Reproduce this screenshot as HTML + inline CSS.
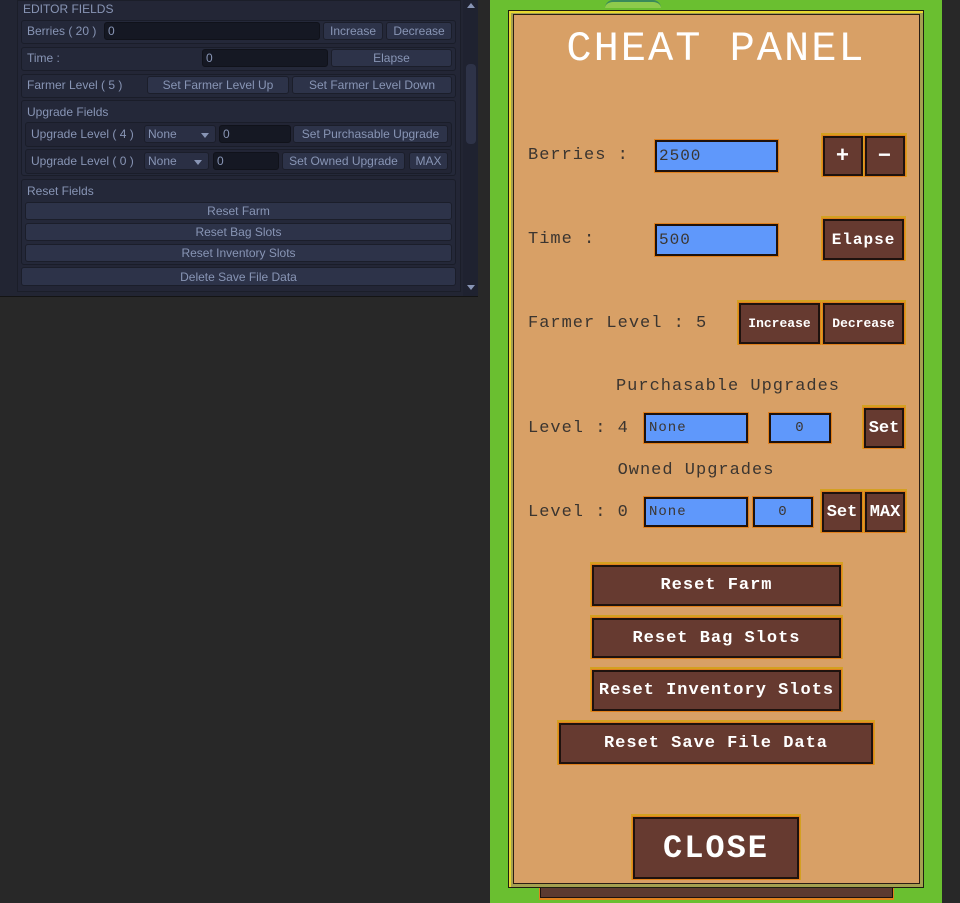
<!DOCTYPE html>
<html><head><meta charset="utf-8"><style>
*{margin:0;padding:0;box-sizing:border-box}
body{width:960px;height:903px;background:#282828;position:relative;overflow:hidden;font-family:"Liberation Sans",sans-serif}
.a{position:absolute}
.ed{color:#8895b5;font-size:12px;line-height:1}
.row{position:absolute;background:#242839;border:1px solid #1a1d29;border-radius:3px}
.btn{position:absolute;background:#2d3349;border:1px solid #1b1e2a;border-radius:3px;color:#8895b5;font-size:12px;display:flex;align-items:center;justify-content:center;white-space:nowrap}
.fld{position:absolute;background:#151823;border:1px solid #10121a;border-radius:3px;color:#8895b5;font-size:12px;padding-left:3px;display:flex;align-items:center}
.dd{position:absolute;background:#2a2f44;border:1px solid #1b1e2a;border-radius:3px;color:#8895b5;font-size:12px;padding-left:3px;display:flex;align-items:center}
.dd:after{content:"";position:absolute;right:6px;top:7px;border:4px solid transparent;border-top:5px solid #8895b5}
.px{font-family:"Liberation Mono",monospace;font-weight:bold}
.lbl{position:absolute;color:#3b3530;font-size:17px;line-height:1;white-space:nowrap;letter-spacing:1px;font-weight:normal !important}
.b{position:absolute;background:#663a30;border:2px solid #1e120e;box-shadow:0 0 0 1px #e0801c,0 -1px 0 2px #d4a020;color:#fff;display:flex;align-items:center;justify-content:center;font-size:15px;white-space:nowrap;letter-spacing:1px}
.in{position:absolute;background:#5f98fb;border:2px solid #1e120e;box-shadow:0 0 0 1px #e0801c;color:#3b3530;font-size:16px;display:flex;align-items:center;letter-spacing:1px;font-weight:normal !important}
</style></head><body>
<div class="a" style="left:0;top:0;width:478px;height:297px;background:#222533;border-bottom:1px solid #141414"></div>
<div class="a" style="left:17px;top:0;width:444px;height:292px;background:#232636;border:1px solid #1b1e29"></div>
<div class="a ed" style="left:23px;top:3px">EDITOR FIELDS</div>
<div class="row" style="left:21px;top:20px;width:435px;height:24px"></div>
<div class="a ed" style="left:27px;top:25px">Berries ( 20 )</div>
<div class="fld" style="left:104px;top:22px;width:216px;height:18px">0</div>
<div class="btn" style="left:323px;top:22px;width:60px;height:18px">Increase</div>
<div class="btn" style="left:386px;top:22px;width:66px;height:18px">Decrease</div>
<div class="row" style="left:21px;top:47px;width:435px;height:24px"></div>
<div class="a ed" style="left:27px;top:52px">Time :</div>
<div class="fld" style="left:202px;top:49px;width:126px;height:18px">0</div>
<div class="btn" style="left:331px;top:49px;width:121px;height:18px">Elapse</div>
<div class="row" style="left:21px;top:74px;width:435px;height:24px"></div>
<div class="a ed" style="left:27px;top:79px">Farmer Level ( 5 )</div>
<div class="btn" style="left:147px;top:76px;width:142px;height:18px">Set Farmer Level Up</div>
<div class="btn" style="left:292px;top:76px;width:160px;height:18px">Set Farmer Level Down</div>
<div class="row" style="left:21px;top:100px;width:435px;height:76px"></div>
<div class="a ed" style="left:27px;top:106px">Upgrade Fields</div>
<div class="row" style="left:25px;top:122px;width:427px;height:25px;background:#222535"></div>
<div class="a ed" style="left:31px;top:128px">Upgrade Level ( 4 )</div>
<div class="dd" style="left:144px;top:125px;width:72px;height:18px">None</div>
<div class="fld" style="left:219px;top:125px;width:72px;height:18px">0</div>
<div class="btn" style="left:293px;top:125px;width:155px;height:18px">Set Purchasable Upgrade</div>
<div class="row" style="left:25px;top:149px;width:427px;height:25px;background:#222535"></div>
<div class="a ed" style="left:31px;top:155px">Upgrade Level ( 0 )</div>
<div class="dd" style="left:144px;top:152px;width:65px;height:18px">None</div>
<div class="fld" style="left:213px;top:152px;width:66px;height:18px">0</div>
<div class="btn" style="left:282px;top:152px;width:123px;height:18px">Set Owned Upgrade</div>
<div class="btn" style="left:409px;top:152px;width:39px;height:18px">MAX</div>
<div class="row" style="left:21px;top:179px;width:435px;height:86px"></div>
<div class="a ed" style="left:27px;top:185px">Reset Fields</div>
<div class="btn" style="left:25px;top:202px;width:427px;height:18px">Reset Farm</div>
<div class="btn" style="left:25px;top:223px;width:427px;height:18px">Reset Bag Slots</div>
<div class="btn" style="left:25px;top:244px;width:427px;height:18px">Reset Inventory Slots</div>
<div class="btn" style="left:21px;top:267px;width:435px;height:19px">Delete Save File Data</div>
<div class="a" style="left:463px;top:0;width:15px;height:296px;background:#1f2230"></div>
<div class="a" style="left:466px;top:64px;width:10px;height:80px;background:#2e3348;border-radius:4px"></div>
<div class="a" style="left:467px;top:3px;border:4px solid transparent;border-bottom:5px solid #8895b5;border-top:0"></div>
<div class="a" style="left:467px;top:285px;border:4px solid transparent;border-top:5px solid #8895b5;border-bottom:0"></div>
<div class="a" style="left:490px;top:0;width:452px;height:903px;background:#6abf30"></div>
<div class="a" style="left:605px;top:0;width:56px;height:8px;background:#8ecb4c;border-radius:28px 28px 0 0;border-top:2px solid #3a8a5a"></div>
<div class="a" style="left:540px;top:884px;width:353px;height:14px;background:#5c3a30;border:1px solid #1e120e;box-shadow:0 1px 0 1px #e0801c"></div>
<div class="a" style="left:508px;top:10px;width:416px;height:878px;background:#a4a050;border:1px solid #1e1e10;box-shadow:inset 2px 2px 0 #e8d830"></div>
<div class="a" style="left:513px;top:14px;width:407px;height:870px;background:#d8a066;border:1px solid #2a1e14"></div>
<div class="a px" style="left:508px;width:416px;top:28px;text-align:center;color:#fff;font-size:42px;font-weight:normal;letter-spacing:2px;line-height:1">CHEAT PANEL</div>
<div class="lbl px" style="left:528px;top:147px">Berries :</div>
<div class="in px" style="left:655px;top:140px;width:123px;height:32px;padding-left:2px">2500</div>
<div class="b px" style="left:823px;top:136px;width:40px;height:40px;font-size:22px">+</div>
<div class="b px" style="left:865px;top:136px;width:40px;height:40px;font-size:22px">−</div>
<div class="lbl px" style="left:528px;top:231px">Time :</div>
<div class="in px" style="left:655px;top:224px;width:123px;height:32px;padding-left:2px">500</div>
<div class="b px" style="left:823px;top:219px;width:81px;height:41px;font-size:16px">Elapse</div>
<div class="lbl px" style="left:528px;top:315px">Farmer Level : 5</div>
<div class="b px" style="left:739px;top:303px;width:81px;height:41px;font-size:13px;letter-spacing:0">Increase</div>
<div class="b px" style="left:823px;top:303px;width:81px;height:41px;font-size:13px;letter-spacing:0">Decrease</div>
<div class="lbl px" style="left:508px;width:440px;text-align:center;top:378px">Purchasable Upgrades</div>
<div class="lbl px" style="left:528px;top:420px">Level : 4</div>
<div class="in px" style="left:644px;top:413px;width:104px;height:30px;font-size:14px;padding-left:3px">None</div>
<div class="in px" style="left:769px;top:413px;width:62px;height:30px;font-size:14px;justify-content:center">0</div>
<div class="b px" style="left:864px;top:408px;width:40px;height:40px;font-size:17px;letter-spacing:0">Set</div>
<div class="lbl px" style="left:508px;width:376px;text-align:center;top:462px">Owned Upgrades</div>
<div class="lbl px" style="left:528px;top:504px">Level : 0</div>
<div class="in px" style="left:644px;top:497px;width:104px;height:30px;font-size:14px;padding-left:3px">None</div>
<div class="in px" style="left:753px;top:497px;width:60px;height:30px;font-size:14px;justify-content:center">0</div>
<div class="b px" style="left:822px;top:492px;width:40px;height:40px;font-size:17px;letter-spacing:0">Set</div>
<div class="b px" style="left:865px;top:492px;width:40px;height:40px;font-size:17px;letter-spacing:0">MAX</div>
<div class="b px" style="left:592px;top:565px;width:249px;height:41px;font-size:17px">Reset Farm</div>
<div class="b px" style="left:592px;top:618px;width:249px;height:40px;font-size:17px">Reset Bag Slots</div>
<div class="b px" style="left:592px;top:670px;width:249px;height:41px;font-size:17px">Reset Inventory Slots</div>
<div class="b px" style="left:559px;top:723px;width:314px;height:41px;font-size:17px">Reset Save File Data</div>
<div class="b px" style="left:633px;top:817px;width:166px;height:62px;font-size:32px;letter-spacing:2px">CLOSE</div>
</body></html>
